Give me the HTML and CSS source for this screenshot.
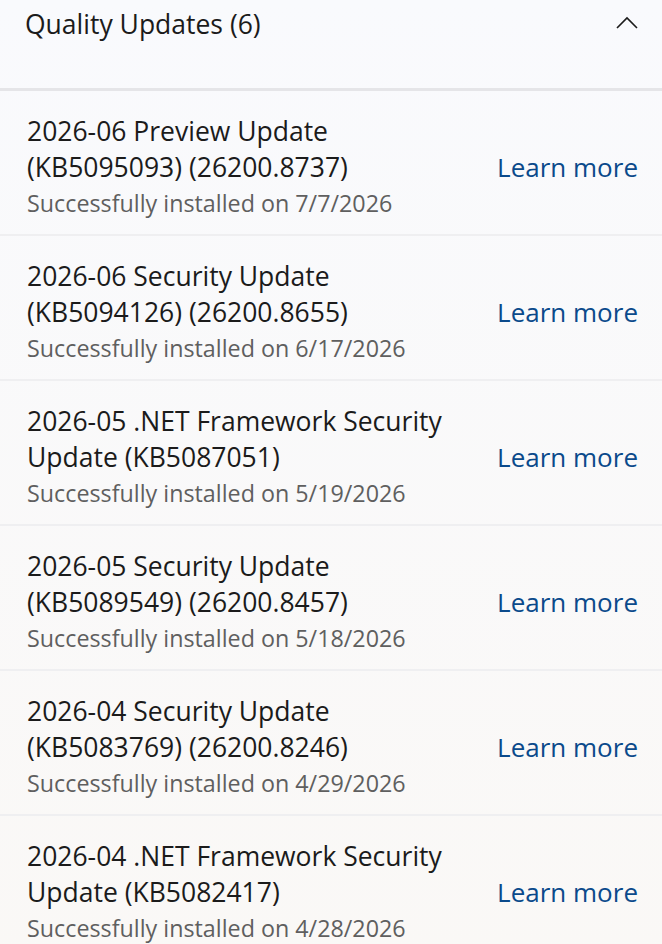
FILE: index.html
```html
<!DOCTYPE html>
<html lang="en">
<head>
  <meta charset="UTF-8" />
  <title>Quality Updates</title>
  <link rel="stylesheet" href="styles.css">
</head>
<body>
  <div class="panel">
    <div class="panel-header">
      <h2>Quality Updates (6)</h2>
      <svg class="chevron" width="24" height="14" viewBox="0 0 24 14">
        <path d="M2 12 L12 2 L22 12" fill="none" stroke="#1b1b1b" stroke-width="1.6"/>
      </svg>
    </div>

    <ul class="update-list">
      <li class="update-row">
        <div class="update-info">
          <div class="update-title">2026-06 Preview Update<br>(KB5095093) (26200.8737)</div>
          <div class="update-status">Successfully installed on 7/7/2026</div>
        </div>
        <a class="learn-more" href="#">Learn more</a>
      </li>
      <li class="update-row">
        <div class="update-info">
          <div class="update-title">2026-06 Security Update<br>(KB5094126) (26200.8655)</div>
          <div class="update-status">Successfully installed on 6/17/2026</div>
        </div>
        <a class="learn-more" href="#">Learn more</a>
      </li>
      <li class="update-row">
        <div class="update-info">
          <div class="update-title">2026-05 .NET Framework Security<br>Update (KB5087051)</div>
          <div class="update-status">Successfully installed on 5/19/2026</div>
        </div>
        <a class="learn-more" href="#">Learn more</a>
      </li>
      <li class="update-row">
        <div class="update-info">
          <div class="update-title">2026-05 Security Update<br>(KB5089549) (26200.8457)</div>
          <div class="update-status">Successfully installed on 5/18/2026</div>
        </div>
        <a class="learn-more" href="#">Learn more</a>
      </li>
      <li class="update-row">
        <div class="update-info">
          <div class="update-title">2026-04 Security Update<br>(KB5083769) (26200.8246)</div>
          <div class="update-status">Successfully installed on 4/29/2026</div>
        </div>
        <a class="learn-more" href="#">Learn more</a>
      </li>
      <li class="update-row">
        <div class="update-info">
          <div class="update-title">2026-04 .NET Framework Security<br>Update (KB5082417)</div>
          <div class="update-status">Successfully installed on 4/28/2026</div>
        </div>
        <a class="learn-more" href="#">Learn more</a>
      </li>
    </ul>
  </div>
</body>
</html>
```

FILE: styles.css
```css
* { box-sizing: border-box; margin: 0; padding: 0; }
body {
  font-family: 'Open Sans', 'Noto Sans', sans-serif;
  background: linear-gradient(to bottom, #f9fafd, #faf8f6);
  min-height: 100vh;
  color: #1b1b1b;
}

.panel-header {
  display: flex;
  justify-content: space-between;
  align-items: flex-start;
  height: 91px;
  padding: 4px 23px 0 25px;
  border-bottom: 3px solid #e5e5e8;
}

.panel-header h2 {
  font-size: 26.5px;
  font-weight: 400;
  line-height: 40px;
}

.chevron { margin-top: 12px; }

.update-list { list-style: none; }

.update-row {
  display: flex;
  justify-content: space-between;
  align-items: center;
  height: 145px;
  padding: 22px 24px 13px 27px;
  border-bottom: 2px solid #efeff1;
}

.update-title {
  font-size: 26.5px;
  line-height: 36px;
}

.update-status {
  font-size: 23.3px;
  line-height: 36px;
  color: #5f5f5f;
}

.learn-more {
  font-size: 26px;
  color: #0b4a8b;
  text-decoration: none;
  margin-left: 2px;
}
```
